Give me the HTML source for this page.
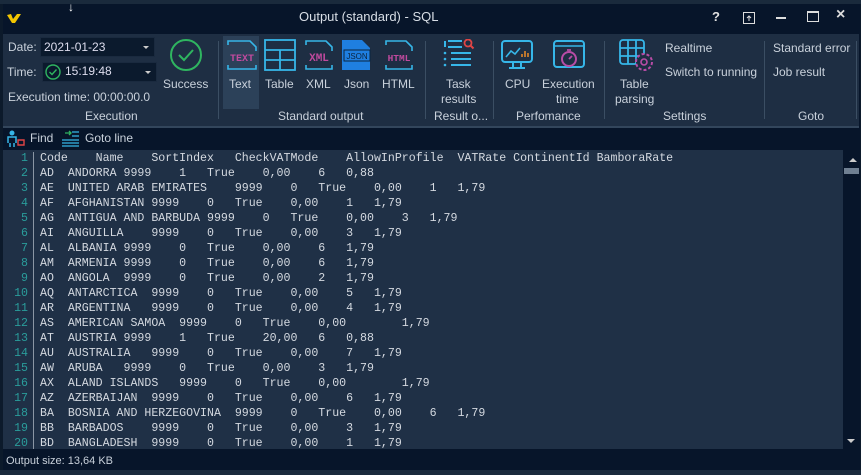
<!DOCTYPE html>
<html><head><meta charset="utf-8"><style>
*{margin:0;padding:0;box-sizing:border-box}
body{width:861px;height:475px;overflow:hidden;background:#0c1a2b;font-family:"Liberation Sans",sans-serif;font-size:12px;color:#c9d1db;position:relative}
.abs{position:absolute}
.t{position:absolute;white-space:nowrap}
pre{font-family:"Liberation Mono",monospace;font-size:11.6px;line-height:15px;tab-size:4;-moz-tab-size:4;color:#d4d9e0}
</style></head><body>
<!-- behind window strip -->
<div class="abs" style="left:0;top:0;width:861px;height:4px;background:#1a2a3c"></div>
<div class="abs" style="left:0;top:470px;width:861px;height:5px;background:#1a2a3c"></div>
<!-- window -->
<div class="abs" style="left:3px;top:4px;width:857px;height:466px;background:#07152a"></div>
<!-- title -->
<svg class="abs" style="left:6px;top:12px" width="16" height="12" viewBox="0 0 16 12"><path d="M1 3 L5 2 L7 7 L11 2 L15 2 L9 11 L6 11 Z" fill="#f2c500"/></svg>
<div class="t" style="left:68px;top:0;color:#fff;font-size:12px">↓</div>
<div class="t" style="left:299px;top:9px;font-size:13px;color:#d8dee6">Output (standard) - SQL</div>
<div class="t" style="left:712px;top:9px;font-size:13px;font-weight:bold;color:#e0e0e0">?</div>
<svg class="abs" style="left:743px;top:12px" width="12" height="12"><rect x="0.5" y="0.5" width="11" height="11" fill="none" stroke="#ddd"/><path d="M6 9V4M4 6l2-2 2 2" stroke="#ddd" fill="none"/></svg>
<div class="abs" style="left:776px;top:17px;width:10px;height:2px;background:#ddd"></div>
<div class="abs" style="left:807px;top:11px;width:12px;height:11px;border:1px solid #ddd;border-top-width:2px"></div>
<div class="t" style="left:836px;top:6px;font-size:16px;font-weight:bold;color:#ddd">×</div>
<!-- ribbon -->
<div class="abs" style="left:3px;top:34px;width:856px;height:92px;background:#1e2e43"></div>
<div class="abs" style="left:3px;top:126px;width:856px;height:2px;background:#33465c"></div>
<div class="t" style="left:8px;top:40px">Date:</div>
<div class="abs" style="left:40px;top:37px;width:115px;height:20px;background:#0b1a2d;border:1px solid #1a2a3f"></div>
<div class="t" style="left:44px;top:40px;color:#dde">2021-01-23</div>
<div class="abs" style="left:143px;top:46px;border:3px solid transparent;border-top:3px solid #ccc"></div>
<div class="t" style="left:7px;top:65px">Time:</div>
<div class="abs" style="left:42px;top:62px;width:115px;height:20px;background:#0b1a2d;border:1px solid #1a2a3f"></div>
<svg class="abs" style="left:45px;top:64px" width="16" height="16"><circle cx="8" cy="8" r="7" fill="none" stroke="#2fb560" stroke-width="1.4"/><path d="M4.5 8l2.5 2.5 4.5-5" stroke="#2fb560" stroke-width="1.4" fill="none"/></svg>
<div class="t" style="left:65px;top:64px;color:#dde">15:19:48</div>
<div class="abs" style="left:145px;top:71px;border:3px solid transparent;border-top:3px solid #ccc"></div>
<div class="t" style="left:8px;top:90px">Execution time: 00:00:00.0</div>
<div class="t" style="left:85px;top:109px">Execution</div>
<svg class="abs" style="left:169px;top:38px" width="34" height="34"><circle cx="17" cy="17" r="15" fill="none" stroke="#2fb560" stroke-width="2"/><path d="M10 17l5 5 9-10" stroke="#2fb560" stroke-width="2" fill="none"/></svg>
<div class="t" style="left:163px;top:77px">Success</div>
<div class="abs" style="left:218px;top:41px;width:1px;height:78px;background:#3b4e63"></div>
<div class="abs" style="left:223px;top:36px;width:36px;height:73px;background:#2c4159"></div>
<svg class="abs" style="left:226px;top:39px" width="32" height="32"><path d="M2 6V2h22l6 6v4M2 26v4h28v-4" stroke="#36b6e8" stroke-width="1.6" fill="none"/><text x="16" y="22" font-family="Liberation Mono" font-weight="bold" font-size="10" fill="#c04a9e" text-anchor="middle">TEXT</text></svg>
<div class="t" style="left:229px;top:77px">Text</div>
<svg class="abs" style="left:264px;top:39px" width="32" height="32"><rect x="1" y="1" width="30" height="30" fill="none" stroke="#36b6e8" stroke-width="1.8"/><path d="M1 11H31M1 21H31M16 11V31" stroke="#36b6e8" stroke-width="1.8"/></svg>
<div class="t" style="left:265px;top:77px">Table</div>
<svg class="abs" style="left:304px;top:39px" width="30" height="32"><path d="M2 6V2h20l6 6v4M2 26v4h26v-4" stroke="#36b6e8" stroke-width="1.6" fill="none"/><text x="15" y="22" font-family="Liberation Mono" font-weight="bold" font-size="11" fill="#c04a9e" text-anchor="middle">XML</text></svg>
<div class="t" style="left:306px;top:77px">XML</div>
<svg class="abs" style="left:341px;top:39px" width="32" height="32"><path d="M1 1h20l8 8v22H1z" fill="#1f7fe0"/><rect x="3" y="11" width="26" height="11" fill="#1f7fe0" stroke="#0b2540"/><text x="16" y="20" font-family="Liberation Sans" font-size="8" fill="#0b2540" text-anchor="middle">JSON</text></svg>
<div class="t" style="left:344px;top:77px">Json</div>
<svg class="abs" style="left:384px;top:39px" width="32" height="32"><path d="M2 6V2h20l6 6v4M2 26v4h26v-4" stroke="#36b6e8" stroke-width="1.6" fill="none"/><text x="15" y="22" font-family="Liberation Mono" font-weight="bold" font-size="9.5" fill="#c04a9e" text-anchor="middle">HTML</text></svg>
<div class="t" style="left:382px;top:77px">HTML</div>
<div class="t" style="left:278px;top:109px">Standard output</div>
<div class="abs" style="left:425px;top:41px;width:1px;height:78px;background:#3b4e63"></div>
<svg class="abs" style="left:442px;top:39px" width="34" height="32"><path d="M6 2h14M6 8h14" stroke="#36b6e8" stroke-width="2"/><path d="M3 2v6M9 14h20M9 20h20M9 26h20" stroke="#36b6e8" stroke-width="2"/><circle cx="3" cy="14" r="1.3" fill="#36b6e8"/><circle cx="3" cy="20" r="1.3" fill="#36b6e8"/><circle cx="3" cy="26" r="1.3" fill="#36b6e8"/><circle cx="26" cy="4" r="3.5" fill="none" stroke="#e04545" stroke-width="1.8"/><path d="M28.5 6.5l3 3" stroke="#e04545" stroke-width="2"/></svg>
<div class="t" style="left:446px;top:77px">Task</div>
<div class="t" style="left:441px;top:92px">results</div>
<div class="t" style="left:434px;top:109px">Result o...</div>
<div class="abs" style="left:493px;top:41px;width:1px;height:78px;background:#3b4e63"></div>
<svg class="abs" style="left:500px;top:39px" width="34" height="32"><rect x="2" y="2" width="30" height="21" rx="3" fill="none" stroke="#36b6e8" stroke-width="2"/><path d="M13 23v5M21 23v5M9 29h16" stroke="#36b6e8" stroke-width="2"/><path d="M6 18l5-6 4 3 5-6" stroke="#36b6e8" stroke-width="1.6" fill="none"/><path d="M22 18v-3M25 18v-6M28 18v-4" stroke="#e0862a" stroke-width="1.6"/></svg>
<div class="t" style="left:505px;top:77px">CPU</div>
<svg class="abs" style="left:552px;top:39px" width="34" height="32"><rect x="2" y="2" width="30" height="26" rx="3" fill="none" stroke="#36b6e8" stroke-width="2"/><path d="M2 7h30" stroke="#36b6e8" stroke-width="1.5"/><circle cx="17" cy="20" r="7" fill="none" stroke="#b84ca6" stroke-width="2"/><path d="M17 20l3-3M15 11h4" stroke="#b84ca6" stroke-width="1.8"/></svg>
<div class="t" style="left:542px;top:77px">Execution</div>
<div class="t" style="left:556px;top:92px">time</div>
<div class="t" style="left:516px;top:109px">Perfomance</div>
<div class="abs" style="left:604px;top:41px;width:1px;height:78px;background:#3b4e63"></div>
<svg class="abs" style="left:619px;top:39px" width="36" height="34"><rect x="1" y="1" width="24" height="24" rx="3" fill="none" stroke="#36b6e8" stroke-width="1.8"/><path d="M1 9h24M1 17h24M9 1v24M17 1v24" stroke="#36b6e8" stroke-width="1.8"/><circle cx="25" cy="23" r="8" fill="#1e2e43" stroke="#b84ca6" stroke-width="2" stroke-dasharray="3 2"/><circle cx="25" cy="23" r="3" fill="none" stroke="#b84ca6" stroke-width="1.6"/></svg>
<div class="t" style="left:620px;top:77px">Table</div>
<div class="t" style="left:615px;top:92px">parsing</div>
<div class="t" style="left:665px;top:41px">Realtime</div>
<div class="t" style="left:665px;top:65px">Switch to running</div>
<div class="t" style="left:663px;top:109px">Settings</div>
<div class="abs" style="left:764px;top:41px;width:1px;height:78px;background:#3b4e63"></div>
<div class="t" style="left:773px;top:41px">Standard error</div>
<div class="t" style="left:773px;top:65px">Job result</div>
<div class="t" style="left:798px;top:109px">Goto</div>
<div class="abs" style="left:856px;top:41px;width:1px;height:78px;background:#3b4e63"></div>
<!-- find bar -->
<svg class="abs" style="left:7px;top:130px" width="18" height="17"><circle cx="5" cy="3" r="2.5" fill="#36b6e8"/><path d="M1 13V7h8v6M3 13v4M7 13v4" stroke="#36b6e8" stroke-width="1.5" fill="none"/><path d="M11 10h6v5h-6z" fill="none" stroke="#e04545" stroke-width="1.4"/></svg>
<div class="t" style="left:30px;top:131px">Find</div>
<svg class="abs" style="left:61px;top:130px" width="18" height="17"><path d="M4 3h6M8 1l2 2-2 2" stroke="#2fb560" stroke-width="1.3" fill="none"/><path d="M11 2h7M11 6h7M1 10h17M1 13h17M1 16h17" stroke="#36b6e8" stroke-width="1.3"/></svg>
<div class="t" style="left:85px;top:131px">Goto line</div>
<!-- editor -->
<div class="abs" style="left:3px;top:150px;width:840px;height:299px;background:#1f3046;overflow:hidden">
<div class="abs" style="left:30px;top:2px;width:1px;height:299px;background:#8a96a4"></div>
<pre class="abs" style="left:0;top:1px;width:25px;text-align:right;color:#2a9d9b">1
2
3
4
5
6
7
8
9
10
11
12
13
14
15
16
17
18
19
20</pre>
<pre class="abs" style="left:37px;top:1px">Code	Name	SortIndex	CheckVATMode	AllowInProfile	VATRate	ContinentId	BamboraRate
AD	ANDORRA	9999	1	True	0,00	6	0,88
AE	UNITED ARAB EMIRATES	9999	0	True	0,00	1	1,79
AF	AFGHANISTAN	9999	0	True	0,00	1	1,79
AG	ANTIGUA AND BARBUDA	9999	0	True	0,00	3	1,79
AI	ANGUILLA	9999	0	True	0,00	3	1,79
AL	ALBANIA	9999	0	True	0,00	6	1,79
AM	ARMENIA	9999	0	True	0,00	6	1,79
AO	ANGOLA	9999	0	True	0,00	2	1,79
AQ	ANTARCTICA	9999	0	True	0,00	5	1,79
AR	ARGENTINA	9999	0	True	0,00	4	1,79
AS	AMERICAN SAMOA	9999	0	True	0,00		1,79
AT	AUSTRIA	9999	1	True	20,00	6	0,88
AU	AUSTRALIA	9999	0	True	0,00	7	1,79
AW	ARUBA	9999	0	True	0,00	3	1,79
AX	ALAND ISLANDS	9999	0	True	0,00		1,79
AZ	AZERBAIJAN	9999	0	True	0,00	6	1,79
BA	BOSNIA AND HERZEGOVINA	9999	0	True	0,00	6	1,79
BB	BARBADOS	9999	0	True	0,00	3	1,79
BD	BANGLADESH	9999	0	True	0,00	1	1,79</pre>
</div>
<!-- scrollbar -->
<div class="abs" style="left:849px;top:158px;border:4px solid transparent;border-bottom:4px solid #ccc;border-top:0"></div>
<div class="abs" style="left:844px;top:168px;width:15px;height:6px;background:#6f7f92"></div>
<div class="abs" style="left:847px;top:439px;border:4px solid transparent;border-top:4px solid #ccc;border-bottom:0"></div>
<!-- status -->
<div class="t" style="left:6px;top:455px;font-size:11px;color:#c9d1db">Output size: 13,64 KB</div>
</body></html>
